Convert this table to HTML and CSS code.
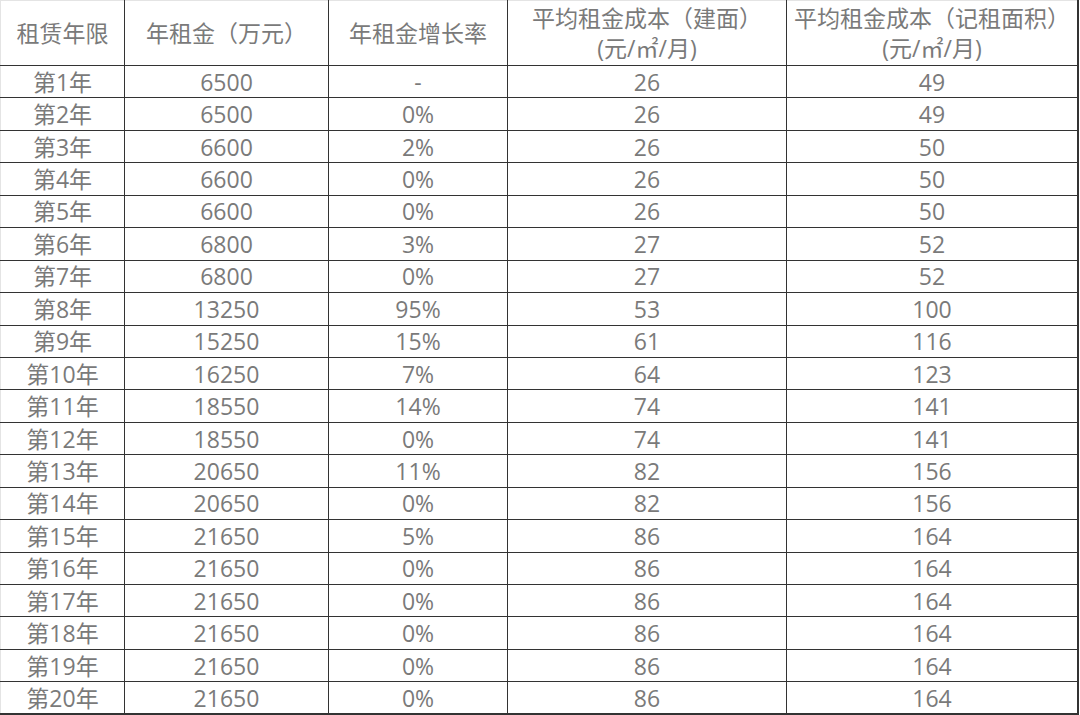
FILE: index.html
```html
<!DOCTYPE html>
<html lang="zh-CN">
<head>
<meta charset="utf-8">
<title>租金表</title>
<link rel="stylesheet" href="styles.css">
</head>
<body>
<table class="rent">
<colgroup>
<col class="c1"><col class="c2"><col class="c3"><col class="c4"><col class="c5">
</colgroup>
<thead>
<tr class="head">
<th>租赁年限</th>
<th>年租金（万元）</th>
<th>年租金增长率</th>
<th>平均租金成本（建面）<br>(元/㎡/月)</th>
<th>平均租金成本（记租面积）<br>(元/㎡/月)</th>
</tr>
</thead>
<tbody>
<tr><td>第1年</td><td>6500</td><td>-</td><td>26</td><td>49</td></tr>
<tr><td>第2年</td><td>6500</td><td>0%</td><td>26</td><td>49</td></tr>
<tr><td>第3年</td><td>6600</td><td>2%</td><td>26</td><td>50</td></tr>
<tr><td>第4年</td><td>6600</td><td>0%</td><td>26</td><td>50</td></tr>
<tr><td>第5年</td><td>6600</td><td>0%</td><td>26</td><td>50</td></tr>
<tr><td>第6年</td><td>6800</td><td>3%</td><td>27</td><td>52</td></tr>
<tr><td>第7年</td><td>6800</td><td>0%</td><td>27</td><td>52</td></tr>
<tr><td>第8年</td><td>13250</td><td>95%</td><td>53</td><td>100</td></tr>
<tr><td>第9年</td><td>15250</td><td>15%</td><td>61</td><td>116</td></tr>
<tr><td>第10年</td><td>16250</td><td>7%</td><td>64</td><td>123</td></tr>
<tr><td>第11年</td><td>18550</td><td>14%</td><td>74</td><td>141</td></tr>
<tr><td>第12年</td><td>18550</td><td>0%</td><td>74</td><td>141</td></tr>
<tr><td>第13年</td><td>20650</td><td>11%</td><td>82</td><td>156</td></tr>
<tr><td>第14年</td><td>20650</td><td>0%</td><td>82</td><td>156</td></tr>
<tr><td>第15年</td><td>21650</td><td>5%</td><td>86</td><td>164</td></tr>
<tr><td>第16年</td><td>21650</td><td>0%</td><td>86</td><td>164</td></tr>
<tr><td>第17年</td><td>21650</td><td>0%</td><td>86</td><td>164</td></tr>
<tr><td>第18年</td><td>21650</td><td>0%</td><td>86</td><td>164</td></tr>
<tr><td>第19年</td><td>21650</td><td>0%</td><td>86</td><td>164</td></tr>
<tr><td>第20年</td><td>21650</td><td>0%</td><td>86</td><td>164</td></tr>
</tbody>
</table>
</body>
</html>
```
FILE: styles.css
```css
html, body {
  margin: 0;
  padding: 0;
  background: #ffffff;
}
.rent {
  width: 1079px;
  border-collapse: collapse;
  table-layout: fixed;
  font-family: "Open Sans", "Noto Sans CJK SC", sans-serif;
  font-size: 23px;
  color: #7a7a7a;
  border-top: 1px solid #e4e4e4;
  border-left: 1px solid #e4e4e4;
}
.c1 { width: 124px; }
.c2 { width: 204px; }
.c3 { width: 179px; }
.c4 { width: 279px; }
.rent th,
.rent td {
  border: 1px solid #333333;
  padding: 0;
  text-align: center;
  vertical-align: middle;
  font-weight: normal;
  line-height: 30px;
  white-space: nowrap;
}
.rent th {
  border-top-color: #e4e4e4;
}
.rent tr th:first-child,
.rent tr td:first-child {
  border-left-color: #e4e4e4;
}
.rent tr th:last-child,
.rent tr td:last-child {
  border-right-width: 2px;
}
.head {
  height: 65px;
}
.rent tbody tr {
  height: 32.45px;
}
.rent tbody tr:last-child td {
  border-bottom-width: 2px;
}
```
